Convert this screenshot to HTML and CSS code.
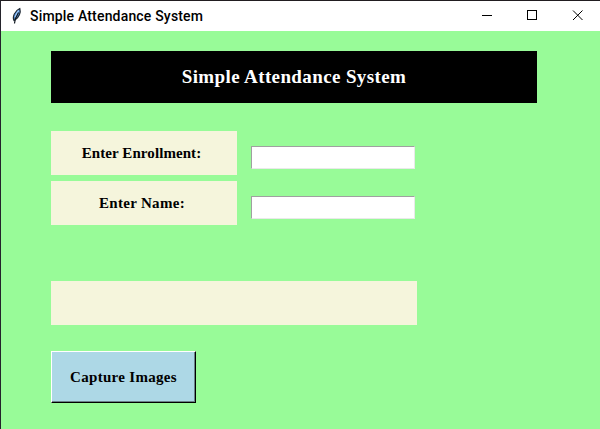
FILE: index.html
```html
<!DOCTYPE html>
<html lang="en">
<head>
<meta charset="utf-8">
<title>Simple Attendance System</title>
<link rel="stylesheet" href="styles.css">
</head>
<body>
<div class="window">
  <header class="titlebar">
    <svg class="feather" width="12" height="18" viewBox="0 0 12 18">
      <path d="M3 13.500C1.200 10 3.500 4 8.800 1.500c1.300 4-.8 9-4.800 11.500z" fill="#5b9be5" stroke="#202832" stroke-width="1.200"/>
      <path d="M7.500 3.500 4 10" stroke="#a9d0ff" stroke-width="1.300"/>
      <path d="M7.500 5.500 4.300 12l-.8 4.500" fill="none" stroke="#111820" stroke-width="1.200"/>
    </svg>
    <span class="caption">Simple Attendance System</span>
    <svg class="controls" width="102" height="12" viewBox="0 0 102 12" fill="none" stroke="#000">
      <path d="M0 5.500h10"/>
      <rect x="45.500" y=".5" width="9" height="9"/>
      <path d="m91 .5 9.500 9.500m0-9.500L91 10"/>
    </svg>
  </header>
  <main class="content">
    <h1 class="heading">Simple Attendance System</h1>
    <form class="form">
      <label class="label" for="enrollment">Enter Enrollment:</label>
      <input class="entry" id="enrollment" type="text">
      <label class="label label-name" for="name">Enter Name:</label>
      <input class="entry" id="name" type="text">
    </form>
    <div class="message"></div>
    <button class="capture" type="button">Capture Images</button>
  </main>
</div>
</body>
</html>
```
FILE: styles.css
```css
* { box-sizing: border-box; }
body { margin: 0; overflow: hidden; background: #98fb98; }
.window {
  height: 429px;
  border-top: 1px solid #211d20;
  border-left: 1px solid #24232b;
  background: #98fb98;
}
.titlebar {
  display: flex;
  align-items: center;
  height: 30px;
  padding: 0 16px 0 10px;
  background: #fff;
}
.feather { margin-right: 7px; }
.caption {
  flex: 1;
  font: 500 14px/28px Roboto, sans-serif;
  color: #000;
  white-space: nowrap;
  letter-spacing: .18px;
}
.content { padding: 20px 50px 0; }
.heading {
  width: 486px;
  height: 52px;
  margin: 0 0 28px;
  background: #000;
  color: #fff;
  font: bold 19px/52px "Liberation Serif", serif;
  letter-spacing: .38px;
  text-align: center;
}
.form {
  display: grid;
  grid-template-columns: 186px 164px;
  grid-auto-rows: 44px;
  gap: 6px 14px;
  margin: 0 0 56px;
}
.label {
  background: #f5f5dc;
  color: #000;
  font: bold 15px/44px "Liberation Serif", serif;
  letter-spacing: .08px;
  text-align: center;
  padding-right: 5px;
}
.label-name {
  letter-spacing: .3px;
  padding-right: 4px;
}
.entry {
  width: 164px;
  height: 23px;
  margin: 15px 0 0;
  padding: 1px 2px;
  border: 1px solid;
  border-color: #a0a0a0 #e9e9e9 #e9e9e9 #a0a0a0;
  border-radius: 0;
  outline: 0;
  background: #fff;
}
.message {
  width: 366px;
  height: 44px;
  margin-bottom: 26px;
  background: #f5f5dc;
}
.capture {
  display: block;
  width: 145px;
  height: 52px;
  padding: 0;
  border: 1px solid;
  border-color: #fff #000 #000 #fff;
  border-radius: 0;
  box-shadow: inset -1px -1px #6b8189;
  background: #add8e6;
  color: #000;
  font: bold 15px/50px "Liberation Serif", serif;
  letter-spacing: .3px;
}
```
